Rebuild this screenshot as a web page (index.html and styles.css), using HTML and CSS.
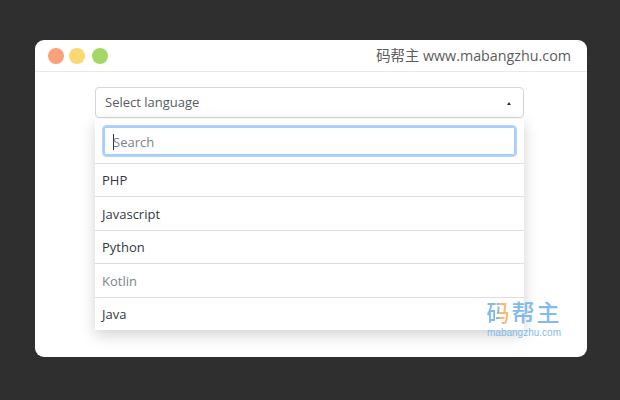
FILE: index.html
```html
<!DOCTYPE html>
<html lang="zh">
<head>
    <meta charset="UTF-8">
    <title>Select language</title>
    <link rel="stylesheet" href="styles.css">
</head>
<body>
    <div class="window">
        <div class="titlebar">
            <div class="dots">
                <span class="dot dot-red"></span>
                <span class="dot dot-yellow"></span>
                <span class="dot dot-green"></span>
            </div>
            <div class="site">码帮主 www.mabangzhu.com</div>
        </div>
        <div class="content">
            <div class="select">
                <div class="select-toggle">
                    <span>Select language</span>
                    <span class="caret"></span>
                </div>
                <div class="dropdown">
                    <div class="search-box">
                        <div class="search-input"><span class="cursor"></span>Search</div>
                    </div>
                    <div class="option">PHP</div>
                    <div class="option">Javascript</div>
                    <div class="option">Python</div>
                    <div class="option disabled">Kotlin</div>
                    <div class="option">Java</div>
                </div>
            </div>
        </div>
        <div class="watermark">
            <div class="wm-logo"><span class="wm-first">码</span>帮主</div>
            <div class="wm-url">mabangzhu.com</div>
        </div>
    </div>
</body>
</html>
```

FILE: styles.css
```css
* { box-sizing: border-box; }
body { margin: 0; width: 620px; height: 400px; padding: 40px 33px 43px 35px; background-color: #2f2f2f; font-family: 'Open Sans', 'Noto Sans', 'Noto Sans CJK SC', sans-serif; overflow: hidden; }
.window { position: relative; height: 317px; background-color: #fff; border-radius: 9px; overflow: hidden; }
.titlebar { display: flex; justify-content: space-between; align-items: center; height: 32px; padding: 0 16px 0 13px; border-bottom: 1px solid #e9e9e9; }
.dots { display: flex; gap: 5px; }
.dot { width: 16px; height: 16px; border-radius: 50%; }
.dot-red { background-color: #f9a27a; }
.dot-yellow { background-color: #fbd774; }
.dot-green { margin-left: 2px; background-color: #a4d766; }
.site { padding-bottom: 2px; font-size: 14.3px; color: #5c5c5c; white-space: nowrap; }
.content { padding: 15px 63px 0 60px; }
.select-toggle { display: flex; justify-content: space-between; align-items: center; height: 31px; padding: 0 12px 1px 9px; border: 1px solid #d6d6d6; border-radius: 4px; font-size: 13px; color: #555c64; }
.caret { width: 0; height: 0; margin-top: 2px; border-left: 2px solid transparent; border-right: 2px solid transparent; border-bottom: 3px solid #333; }
.dropdown { margin-top: 1px; background-color: #fff; box-shadow: 0 5px 14px rgba(0, 0, 0, 0.18); }
.search-box { padding: 6px 7px; }
.search-input { height: 32px; padding: 1px 0 0 10px; line-height: 30px; border: 1px solid #b4d5fb; border-radius: 4px; box-shadow: inset 0 0 0 2px #a8cffb; font-size: 13px; color: #7d848b; }
.cursor { display: inline-block; width: 1px; height: 16px; margin-right: -1px; vertical-align: -3px; background-color: #333; }
.option { height: 33px; padding-left: 7px; line-height: 33px; border-top: 1px solid #dedede; font-size: 13px; color: #33393f; }
.option:nth-child(odd) { height: 34px; line-height: 34px; }
.option.disabled { color: #7d848b; }
.watermark { position: absolute; right: 25px; bottom: 19px; width: 76px; text-align: center; color: #82bbeb; }
.wm-logo { font-family: 'Liberation Sans', 'Noto Sans CJK SC', sans-serif; font-size: 23px; line-height: 27px; font-weight: 500; letter-spacing: 2px; white-space: nowrap; }
.wm-first { background: linear-gradient(90deg, #82bbeb 48%, #fbb877 48%); -webkit-background-clip: text; background-clip: text; color: transparent; }
.wm-url { font-size: 10px; line-height: 11px; font-family: 'Liberation Sans', sans-serif; white-space: nowrap; }
```
